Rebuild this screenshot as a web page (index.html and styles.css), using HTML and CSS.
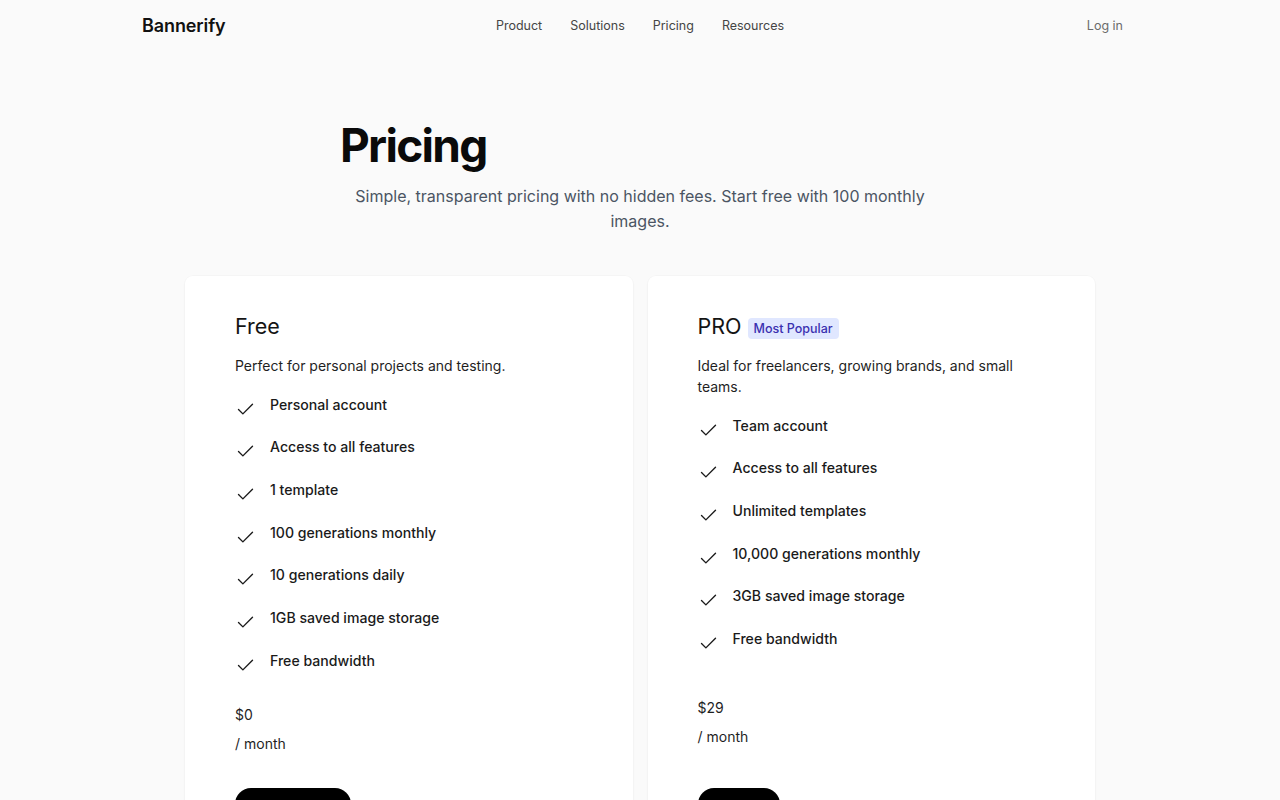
FILE: index.html
```html
<!DOCTYPE html>
<html lang="en">
<head>
<meta charset="utf-8">
<title>Pricing - Bannerify</title>
<link rel="stylesheet" href="styles.css">
</head>
<body>
<header class="topbar">
  <div class="topbar-inner">
    <a class="brand" href="#">Bannerify</a>
    <nav class="main-nav">
      <a href="#">Product</a>
      <a href="#">Solutions</a>
      <a href="#">Pricing</a>
      <a href="#">Resources</a>
    </nav>
    <div class="nav-right"><a class="login" href="#">Log in</a></div>
  </div>
</header>
<main class="page">
  <section class="intro">
    <h1 class="title">Pricing</h1>
    <p class="subtitle">Simple, transparent pricing with no hidden fees. Start free with 100 monthly images.</p>
  </section>
  <section class="plans">
    <article class="card">
      <div class="plan-head"><h2 class="plan-name">Free</h2></div>
      <p class="plan-desc">Perfect for personal projects and testing.</p>
      <ul class="features">
        <li><svg class="check" viewBox="0 0 24 24"><path d="M20 6 9 17l-5-5"/></svg><span>Personal account</span></li>
        <li><svg class="check" viewBox="0 0 24 24"><path d="M20 6 9 17l-5-5"/></svg><span>Access to all features</span></li>
        <li><svg class="check" viewBox="0 0 24 24"><path d="M20 6 9 17l-5-5"/></svg><span>1 template</span></li>
        <li><svg class="check" viewBox="0 0 24 24"><path d="M20 6 9 17l-5-5"/></svg><span>100 generations monthly</span></li>
        <li><svg class="check" viewBox="0 0 24 24"><path d="M20 6 9 17l-5-5"/></svg><span>10 generations daily</span></li>
        <li><svg class="check" viewBox="0 0 24 24"><path d="M20 6 9 17l-5-5"/></svg><span>1GB saved image storage</span></li>
        <li><svg class="check" viewBox="0 0 24 24"><path d="M20 6 9 17l-5-5"/></svg><span>Free bandwidth</span></li>
      </ul>
      <div class="price-block">
        <div class="price">$0</div>
        <div class="period">/ month</div>
      </div>
      <div class="actions"><a class="btn btn-free" href="#">Get started</a></div>
    </article>
    <article class="card">
      <div class="plan-head"><h2 class="plan-name">PRO</h2><span class="badge">Most Popular</span></div>
      <p class="plan-desc">Ideal for freelancers, growing brands, and small teams.</p>
      <ul class="features">
        <li><svg class="check" viewBox="0 0 24 24"><path d="M20 6 9 17l-5-5"/></svg><span>Team account</span></li>
        <li><svg class="check" viewBox="0 0 24 24"><path d="M20 6 9 17l-5-5"/></svg><span>Access to all features</span></li>
        <li><svg class="check" viewBox="0 0 24 24"><path d="M20 6 9 17l-5-5"/></svg><span>Unlimited templates</span></li>
        <li><svg class="check" viewBox="0 0 24 24"><path d="M20 6 9 17l-5-5"/></svg><span>10,000 generations monthly</span></li>
        <li><svg class="check" viewBox="0 0 24 24"><path d="M20 6 9 17l-5-5"/></svg><span>3GB saved image storage</span></li>
        <li><svg class="check" viewBox="0 0 24 24"><path d="M20 6 9 17l-5-5"/></svg><span>Free bandwidth</span></li>
      </ul>
      <div class="price-block">
        <div class="price">$29</div>
        <div class="period">/ month</div>
      </div>
      <div class="actions"><a class="btn btn-pro" href="#">Upgrade</a></div>
    </article>
  </section>
</main>
</body>
</html>
```
FILE: styles.css
```css
* { box-sizing: border-box; }
html, body { margin: 0; padding: 0; }
body {
  background: #fafafa;
  font-family: Inter, "Noto Sans", "Liberation Sans", sans-serif;
  color: #111;
  -webkit-font-smoothing: antialiased;
}
a { text-decoration: none; color: inherit; }

.topbar { height: 50px; }
.topbar-inner {
  width: 996px;
  margin: 0 auto;
  height: 50px;
  display: grid;
  grid-template-columns: 1fr auto 1fr;
  align-items: center;
}
.brand {
  font-size: 18px;
  font-weight: 600;
  color: #111;
  letter-spacing: -0.1px;
}
.main-nav {
  display: flex;
  gap: 28px;
  font-size: 12.5px;
  color: #454545;
}
.nav-right { display: flex; justify-content: flex-end; }
.login {
  font-size: 12.5px;
  color: #6b6b6b;
  padding: 0 15px;
}

.page { padding-top: 72px; }
.intro {
  width: 600px;
  margin: 0 auto;
}
.title {
  margin: 0;
  font-size: 46px;
  line-height: 46px;
  font-weight: 700;
  letter-spacing: -1.7px;
  color: #0a0a0a;
}
.subtitle {
  margin: 15.5px 0 0;
  text-align: center;
  font-size: 16px;
  line-height: 25px;
  color: #4b5563;
}

.plans {
  width: 910px;
  margin: 42.5px auto 0;
  display: grid;
  grid-template-columns: 1fr 1fr;
  gap: 15px;
}
.card {
  background: #fff;
  border-radius: 8px;
  box-shadow: 0 0 0 1px rgba(0,0,0,0.015), 0 1px 3px rgba(0,0,0,0.03);
  padding: 36px 50px;
  min-height: 588px;
  display: flex;
  flex-direction: column;
}
.plan-head {
  display: flex;
  align-items: center;
  gap: 6px;
  height: 28px;
}
.plan-name {
  margin: 0;
  font-size: 21.5px;
  line-height: 28px;
  font-weight: 400;
  color: #141414;
}
.badge {
  display: inline-block;
  height: 21px;
  line-height: 21px;
  padding: 0 6px;
  border-radius: 4px;
  background: #e0e7ff;
  color: #3a30b0;
  font-size: 12.5px;
  font-weight: 500;
  margin-top: 4px;
}
.plan-desc {
  margin: 14.5px 0 0;
  font-size: 14px;
  line-height: 21px;
  color: #1f1f1f;
}
.features {
  list-style: none;
  margin: 8.17px 0 0;
  padding: 0;
  flex-grow: 2;
}
.features li {
  display: flex;
  align-items: flex-start;
  padding: 10px 0;
  line-height: 22.67px;
  font-size: 14.1px;
  font-weight: 500;
  color: #1a1a1a;
}
.check {
  width: 21px;
  height: 21px;
  flex: none;
  margin-top: 5px;
  margin-bottom: -5px;
  margin-right: 14px;
  fill: none;
  stroke: #1a1a1a;
  stroke-width: 1.6;
  stroke-linecap: round;
  stroke-linejoin: round;
}
.price-block {
  flex-grow: 1;
  padding-top: 1px;
  font-size: 14px;
  color: #1f1f1f;
}
.price { line-height: 28px; }
.period { line-height: 28px; margin-top: 0.7px; }
.actions { margin-top: 21px; display: flex; }
.btn {
  display: inline-flex;
  align-items: center;
  height: 40px;
  border-radius: 16px;
  background: #000;
  color: #fff;
  font-size: 14px;
  font-weight: 500;
}
.btn-free { padding: 0 20px; width: 116px; justify-content: center; }
.btn-pro { padding: 0 14px; width: 82px; justify-content: center; }
```
